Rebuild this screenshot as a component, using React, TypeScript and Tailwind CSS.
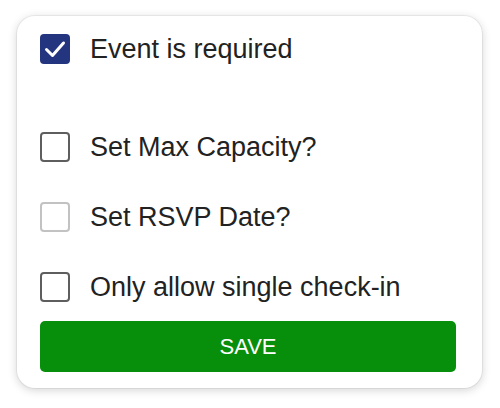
import { useState } from 'react';

type Opt = { id: string; label: string; checked: boolean; disabled?: boolean };

const INITIAL: Opt[] = [
  { id: 'required', label: 'Event is required', checked: true },
  { id: 'capacity', label: 'Set Max Capacity?', checked: false },
  { id: 'rsvp', label: 'Set RSVP Date?', checked: false, disabled: true },
  { id: 'checkin', label: 'Only allow single check-in', checked: false },
];

function Box({ checked, disabled }: { checked: boolean; disabled?: boolean }) {
  if (checked) {
    return (
      <span className="flex h-[30px] w-[30px] shrink-0 items-center justify-center rounded-[4px] bg-[#24357f]">
        <svg width="30" height="30" viewBox="0 0 30 30" fill="none">
          <polyline
            points="6.5,15.5 12.5,21.5 23.5,9"
            stroke="#fff"
            strokeWidth="3"
            strokeLinecap="round"
            strokeLinejoin="round"
          />
        </svg>
      </span>
    );
  }
  return (
    <span
      className={`h-[30px] w-[30px] shrink-0 rounded-[4px] border-[2.5px] bg-white ${
        disabled ? 'border-[#c2c2c2]' : 'border-[#5e5e5e]'
      }`}
    />
  );
}

export default function App() {
  const [opts, setOpts] = useState(INITIAL);

  const toggle = (id: string) =>
    setOpts((prev) => prev.map((o) => (o.id === id && !o.disabled ? { ...o, checked: !o.checked } : o)));

  return (
    <div className="h-[408px] w-[500px] bg-white pl-[17px] pt-[16px] font-['Liberation_Sans',Arial,sans-serif]">
      <div className="flex w-[465px] flex-col rounded-[18px] bg-white pb-[16px] pl-[23px] pt-[18px] shadow-[0_0_0_1px_rgba(0,0,0,0.05),0_2px_10px_rgba(0,0,0,0.18)]">
        <div className="flex flex-col gap-[40px]">
          {opts.map((o, i) => (
            <button
              key={o.id}
              type="button"
              onClick={() => toggle(o.id)}
              className={`flex h-[30px] items-center gap-[20px] text-left ${i === 1 ? 'mt-[28px]' : ''}`}
            >
              <Box checked={o.checked} disabled={o.disabled} />
              <span className="text-[27px] leading-none text-[#222]">{o.label}</span>
            </button>
          ))}
        </div>
        <button
          type="button"
          className="mt-[19px] flex h-[51px] w-[416px] items-center justify-center rounded-[5px] bg-[#078e0a] text-[22px] text-white"
        >
          SAVE
        </button>
      </div>
    </div>
  );
}
